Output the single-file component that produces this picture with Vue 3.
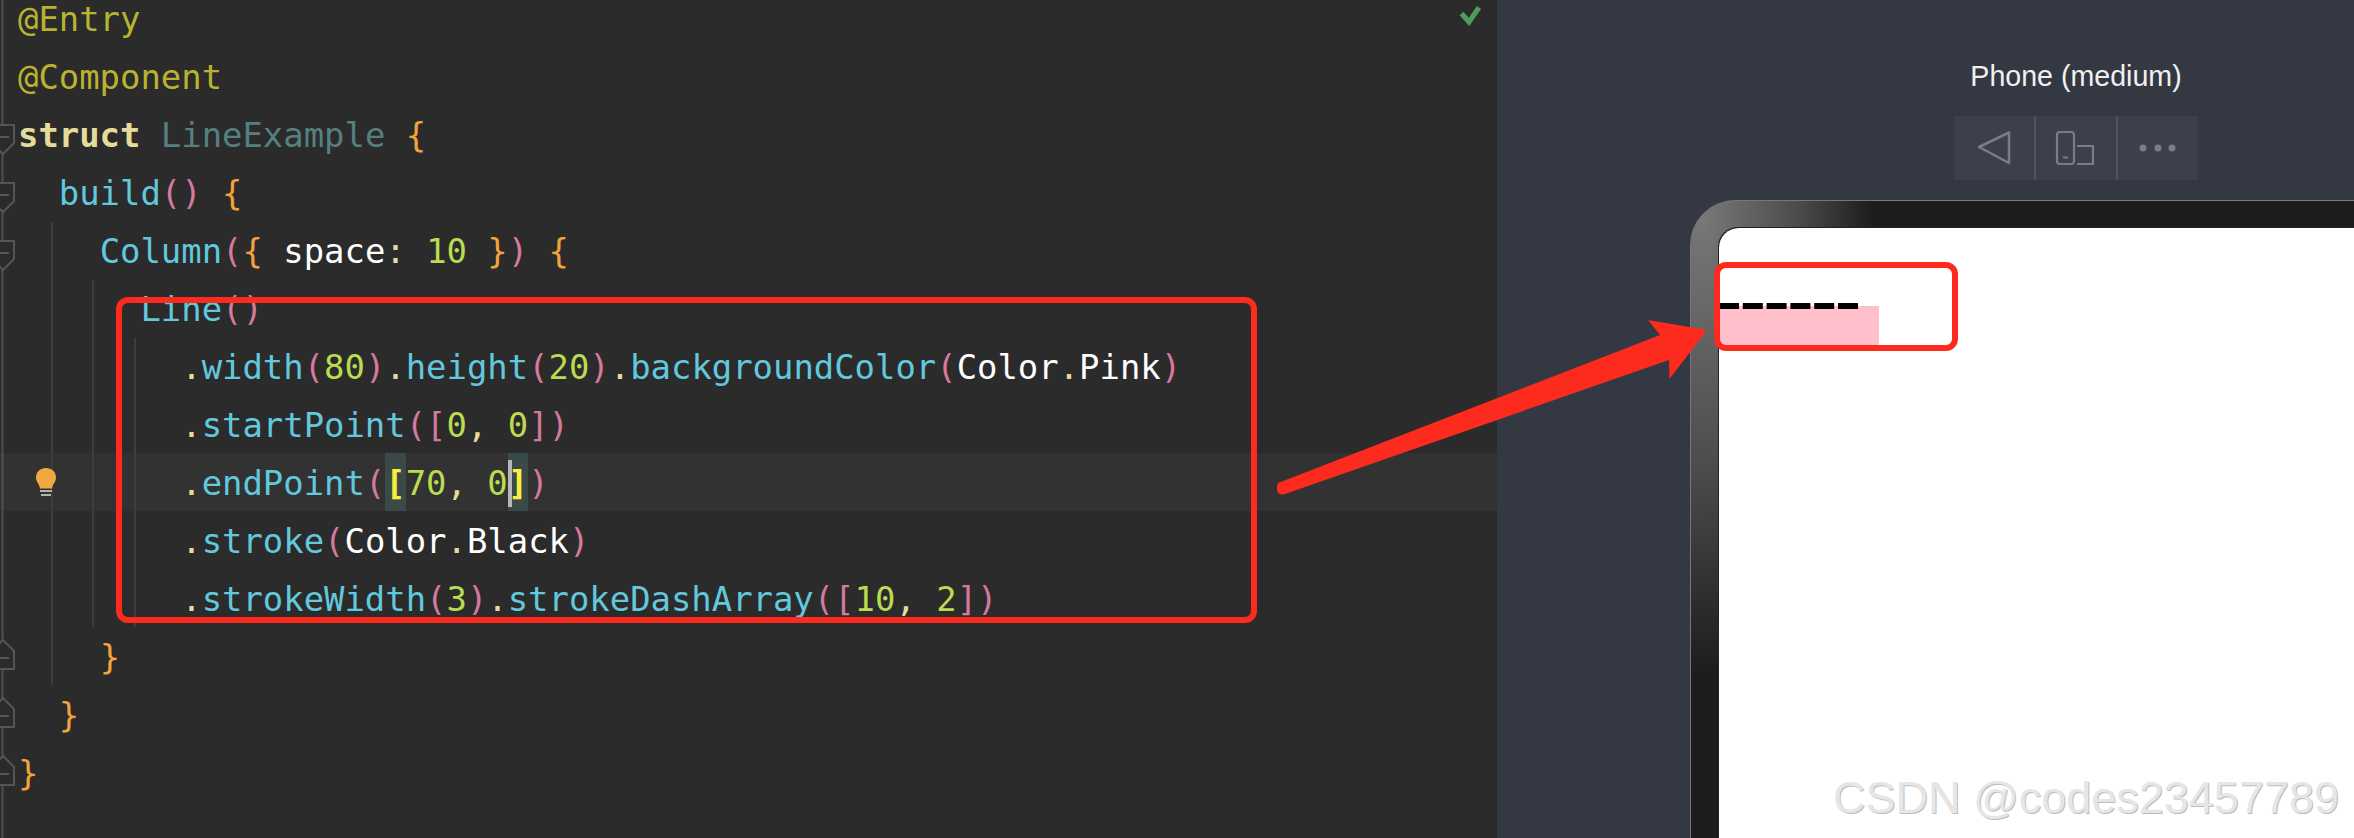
<script setup>
const lines = [
  { tokens: [['ann', '@Entry']] },
  { tokens: [['ann', '@Component']] },
  { tokens: [['kw', 'struct'], ['sp', ' '], ['cls', 'LineExample'], ['sp', ' '], ['brace', '{']] },
  { tokens: [['sp', '  '], ['fn', 'build'], ['paren', '()'], ['sp', ' '], ['brace', '{']] },
  { tokens: [['sp', '    '], ['fn', 'Column'], ['paren', '('], ['brace', '{'], ['sp', ' '], ['plain', 'space'], ['punct', ':'], ['sp', ' '], ['num', '10'], ['sp', ' '], ['brace', '}'], ['paren', ')'], ['sp', ' '], ['brace', '{']] },
  { tokens: [['sp', '      '], ['fn', 'Line'], ['paren', '()']] },
  { tokens: [['sp', '        '], ['punct', '.'], ['fn', 'width'], ['paren', '('], ['num', '80'], ['paren', ')'], ['punct', '.'], ['fn', 'height'], ['paren', '('], ['num', '20'], ['paren', ')'], ['punct', '.'], ['fn', 'backgroundColor'], ['paren', '('], ['plain', 'Color'], ['punct', '.'], ['plain', 'Pink'], ['paren', ')']] },
  { tokens: [['sp', '        '], ['punct', '.'], ['fn', 'startPoint'], ['paren', '(['], ['num', '0'], ['punct', ','], ['sp', ' '], ['num', '0'], ['paren', '])']] },
  { current: true, tokens: [['sp', '        '], ['punct', '.'], ['fn', 'endPoint'], ['paren', '('], ['match', '['], ['num', '70'], ['punct', ','], ['sp', ' '], ['num', '0'], ['match caret', ']'], ['paren', ')']] },
  { tokens: [['sp', '        '], ['punct', '.'], ['fn', 'stroke'], ['paren', '('], ['plain', 'Color'], ['punct', '.'], ['plain', 'Black'], ['paren', ')']] },
  { tokens: [['sp', '        '], ['punct', '.'], ['fn', 'strokeWidth'], ['paren', '('], ['num', '3'], ['paren', ')'], ['punct', '.'], ['fn', 'strokeDashArray'], ['paren', '(['], ['num', '10'], ['punct', ','], ['sp', ' '], ['num', '2'], ['paren', '])']] },
  { tokens: [['sp', '    '], ['brace', '}']] },
  { tokens: [['sp', '  '], ['brace', '}']] },
  { tokens: [['brace', '}']] },
]
const foldOpen = [125, 183, 241]
const foldClose = [640, 698, 756]
const guides = [
  { x: 52, y1: 222, y2: 685 },
  { x: 93, y1: 280, y2: 627 },
  { x: 135, y1: 338, y2: 627 },
]
</script>

<template>
  <div class="root">
    <section class="editor">
      <div class="code">
        <div v-for="(line, i) in lines" :key="i" class="row" :class="{ current: line.current }">
          <span v-for="(tok, j) in line.tokens" :key="j" :class="tok[0]">{{ tok[1] }}</span>
        </div>
      </div>
      <svg class="gutter" width="160" height="838" viewBox="0 0 160 838">
        <line x1="2.5" y1="0" x2="2.5" y2="838" stroke="#505050" stroke-width="2" />
        <line v-for="g in guides" :key="g.x" :x1="g.x" :y1="g.y1" :x2="g.x" :y2="g.y2" stroke="#3d3d3d" stroke-width="2" />
        <g v-for="y in foldOpen" :key="y" fill="#2b2b2b" stroke="#555" stroke-width="2">
          <path :d="`M0 ${y}H14V${y + 18}L3 ${y + 29}L-8 ${y + 18}V${y}Z`" />
          <path :d="`M0 ${y + 12}H9`" />
        </g>
        <g v-for="y in foldClose" :key="y" fill="#2b2b2b" stroke="#555" stroke-width="2">
          <path :d="`M3 ${y}L14 ${y + 11}V${y + 29}H-8V${y + 11}Z`" />
          <path :d="`M0 ${y + 18}H9`" />
        </g>
        <g>
          <path d="M46 468c-5.800 0-10 4-10 9.500c0 4.500 3.500 6.500 4 11h12c.5-4.500 4-6.500 4-11c0-5.500-4.200-9.500-10-9.500Z" fill="#f0a840" />
          <path d="M40 491h12M41 495h10" stroke="#b4b4b4" stroke-width="2" />
        </g>
      </svg>
      <svg class="check" width="24" height="20" viewBox="0 0 24 20">
        <path d="M2.500 7.500L10 16L20 1.500" fill="none" stroke="#4f9d5a" stroke-width="5" />
      </svg>
    </section>

    <section class="preview">
      <div class="device">
        <div class="label">Phone (medium)</div>
        <div class="toolbar">
          <div class="tool">
            <svg width="36" height="38" viewBox="0 0 36 38"><path d="M3 18L33 3.500V34Z" fill="none" stroke="#7b7d82" stroke-width="2.500" stroke-linejoin="round" /></svg>
          </div>
          <div class="tool">
            <svg width="42" height="36" viewBox="0 0 42 36">
              <rect x="2" y="2" width="17" height="32" rx="3" fill="none" stroke="#7b7d82" stroke-width="2.200" />
              <path d="M8 27.500h5" stroke="#7b7d82" stroke-width="2" />
              <path d="M22 16H38V34H22" fill="none" stroke="#7b7d82" stroke-width="2.200" stroke-linejoin="round" />
            </svg>
          </div>
          <div class="tool">
            <svg width="38" height="10" viewBox="0 0 38 10" fill="#7b7d82">
              <circle cx="4" cy="5" r="3.500" /><circle cx="19" cy="5" r="3.500" /><circle cx="33" cy="5" r="3.500" />
            </svg>
          </div>
        </div>
        <div class="frame">
          <div class="screen">
            <svg class="dash" width="160" height="39" viewBox="0 0 160 39">
              <line x1="0" y1="0" x2="140" y2="0" stroke="#000" stroke-width="6" stroke-dasharray="20 3.800" />
            </svg>
          </div>
        </div>
      </div>
    </section>

    <svg class="marks" width="2354" height="838" viewBox="0 0 2354 838">
      <rect x="119" y="300" width="1135" height="320" rx="9" fill="none" stroke="#fd2a1e" stroke-width="6" />
      <rect x="1717" y="265" width="238" height="83" rx="9" fill="none" stroke="#fd2a1e" stroke-width="6" />
      <path d="M1278 483L1660 335L1648 320L1707 330L1669.500 379L1669 360L1285 494Q1277 496 1277 489Q1277 485 1278 483Z" fill="#fd2a1e" />
    </svg>
    <div class="watermark">CSDN @codes23457789</div>
  </div>
</template>

<style scoped>
.root {
  position: relative;
  display: flex;
  width: 2354px;
  height: 838px;
  overflow: hidden;
  background: #2b2b2b;
}
.editor {
  position: relative;
  flex: 0 0 1497px;
  background: #2b2b2b;
  overflow: hidden;
}
.code {
  margin-top: -11px;
  font-family: "DejaVu Sans Mono", "Liberation Mono", monospace;
  font-size: 33.9px;
}
.row {
  height: 58px;
  line-height: 62.6px;
  padding-left: 18px;
  white-space: pre;
  color: #fff;
}
.row.current { background: #323232; }
.ann { color: #b9b42f; }
.kw { color: #e6dc99; font-weight: 700; }
.cls { color: #558080; }
.fn { color: #62c8de; }
.paren { color: #d67a9d; }
.brace { color: #f2a33c; }
.plain { color: #fff; }
.punct { color: #e6dc99; }
.num { color: #b9dc50; }
.match {
  display: inline-block;
  position: relative;
  height: 58px;
  background: #3a4a48;
  color: #fcee3e;
  font-weight: 700;
}
.caret::before {
  content: "";
  position: absolute;
  left: 0;
  top: 7px;
  width: 4px;
  height: 47px;
  background: #b8b8b8;
}
.gutter {
  position: absolute;
  left: 0;
  top: 0;
  overflow: hidden;
}
.check {
  position: absolute;
  left: 1459px;
  top: 6px;
}
.preview {
  flex: 1 1 auto;
  background: #343842;
  min-width: 0;
}
.device {
  display: flex;
  flex-direction: column;
  align-items: center;
  width: 772px;
  margin-left: 193px;
  padding-top: 61px;
}
.label {
  height: 30px;
  line-height: 30px;
  margin-bottom: 25px;
  font-family: "Liberation Sans", Arial, sans-serif;
  font-size: 28.6px;
  color: #f0f0f0;
  white-space: nowrap;
}
.toolbar {
  display: flex;
  width: 244px;
  height: 64px;
  margin-bottom: 20px;
  background: #3c404a;
}
.tool {
  flex: 1 1 0;
  display: flex;
  align-items: center;
  justify-content: center;
}
.tool + .tool { border-left: 2px solid #50545c; }
.frame {
  box-sizing: border-box;
  align-self: stretch;
  height: 700px;
  padding: 27px 0 0 28px;
  border: 1px solid #777;
  border-radius: 45px 45px 0 0;
  background: radial-gradient(ellipse 170px 460px at 12px 15px, #787878 0%, #4c4c4c 55%, #1c1c1c 100%);
}
.screen {
  height: 100%;
  padding-top: 78px;
  box-sizing: border-box;
  background: #fff;
  border-radius: 20px 0 0 0;
  box-shadow: -1px -1px 0 #222;
}
.dash {
  display: block;
  background: #ffc0cb;
  overflow: visible;
}
.marks {
  position: absolute;
  left: 0;
  top: 0;
  pointer-events: none;
}
.watermark {
  position: absolute;
  left: 1833px;
  top: 772px;
  font-family: "Liberation Sans", Arial, sans-serif;
  font-size: 45px;
  line-height: 52px;
  color: #e6e6e6;
  text-shadow: 1px 1px 0 #bcbcbc;
  white-space: nowrap;
}
</style>
<style>
html, body { background: #2b2b2b; }
</style>
